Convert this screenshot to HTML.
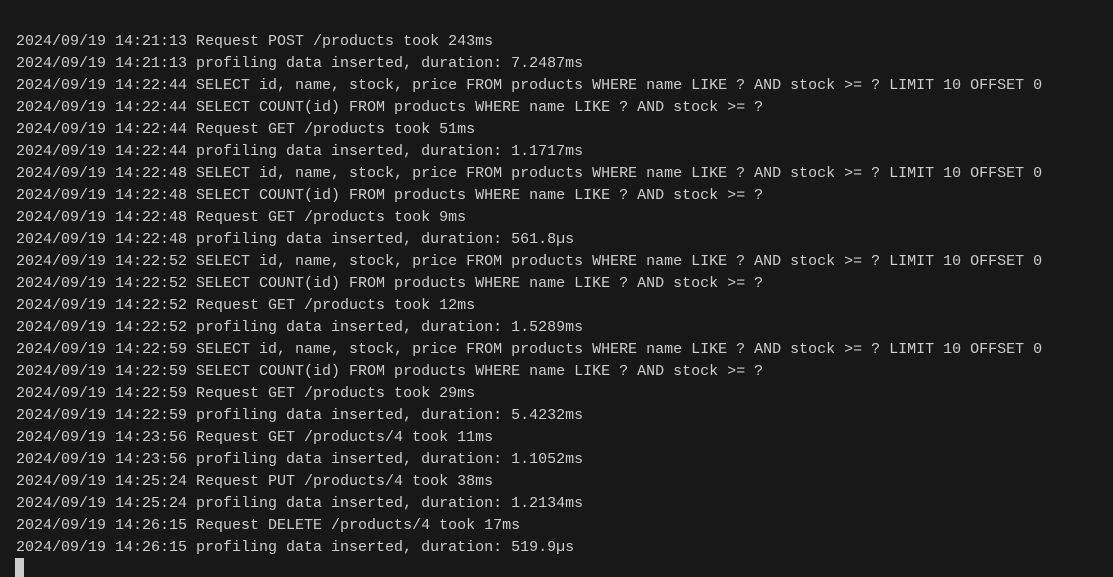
<!DOCTYPE html>
<html><head><meta charset="utf-8"><style>
html,body{margin:0;padding:0;background:#181818;width:1113px;height:577px;overflow:hidden}
pre{margin:0;position:absolute;left:16px;top:31px;font-family:"Liberation Mono",monospace;font-size:15px;line-height:22px;color:#cccccc;white-space:pre}
.cur{position:absolute;left:15px;top:558px;width:9px;height:19px;background:#cccccc}
</style></head><body>
<pre>2024/09/19 14:21:13 Request POST /products took 243ms
2024/09/19 14:21:13 profiling data inserted, duration: 7.2487ms
2024/09/19 14:22:44 SELECT id, name, stock, price FROM products WHERE name LIKE ? AND stock &gt;= ? LIMIT 10 OFFSET 0
2024/09/19 14:22:44 SELECT COUNT(id) FROM products WHERE name LIKE ? AND stock &gt;= ?
2024/09/19 14:22:44 Request GET /products took 51ms
2024/09/19 14:22:44 profiling data inserted, duration: 1.1717ms
2024/09/19 14:22:48 SELECT id, name, stock, price FROM products WHERE name LIKE ? AND stock &gt;= ? LIMIT 10 OFFSET 0
2024/09/19 14:22:48 SELECT COUNT(id) FROM products WHERE name LIKE ? AND stock &gt;= ?
2024/09/19 14:22:48 Request GET /products took 9ms
2024/09/19 14:22:48 profiling data inserted, duration: 561.8µs
2024/09/19 14:22:52 SELECT id, name, stock, price FROM products WHERE name LIKE ? AND stock &gt;= ? LIMIT 10 OFFSET 0
2024/09/19 14:22:52 SELECT COUNT(id) FROM products WHERE name LIKE ? AND stock &gt;= ?
2024/09/19 14:22:52 Request GET /products took 12ms
2024/09/19 14:22:52 profiling data inserted, duration: 1.5289ms
2024/09/19 14:22:59 SELECT id, name, stock, price FROM products WHERE name LIKE ? AND stock &gt;= ? LIMIT 10 OFFSET 0
2024/09/19 14:22:59 SELECT COUNT(id) FROM products WHERE name LIKE ? AND stock &gt;= ?
2024/09/19 14:22:59 Request GET /products took 29ms
2024/09/19 14:22:59 profiling data inserted, duration: 5.4232ms
2024/09/19 14:23:56 Request GET /products/4 took 11ms
2024/09/19 14:23:56 profiling data inserted, duration: 1.1052ms
2024/09/19 14:25:24 Request PUT /products/4 took 38ms
2024/09/19 14:25:24 profiling data inserted, duration: 1.2134ms
2024/09/19 14:26:15 Request DELETE /products/4 took 17ms
2024/09/19 14:26:15 profiling data inserted, duration: 519.9µs</pre>
<div class="cur"></div>
</body></html>
